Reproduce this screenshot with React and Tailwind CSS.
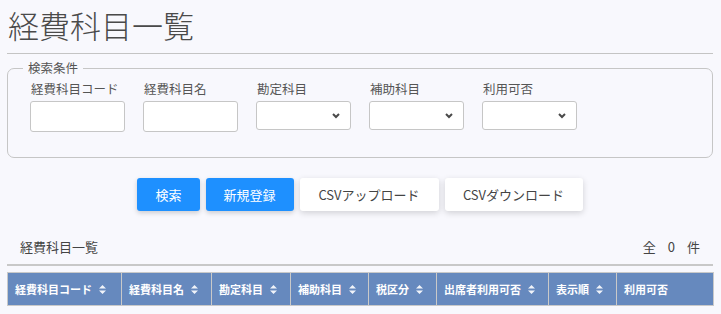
import React from "react";

const F = { fontFamily: '"Noto Sans CJK JP", "Noto Sans", sans-serif' };

function SortIcon() {
  return (
    <svg width="7" height="9" viewBox="0 0 7 9" className="ml-[7px] shrink-0" fill="#f0f3f9">
      <path d="M3.5 0 L7 3.6 H0 Z M0 5.4 H7 L3.5 9 Z" />
    </svg>
  );
}

function Chevron() {
  return (
    <svg width="8" height="6" viewBox="0 0 8 6" fill="none" stroke="#4a4a4a" strokeWidth="2">
      <polyline points="1,1 4,4 7,1" />
    </svg>
  );
}

const cols = [
  { label: "経費科目コード", w: 114, sort: true },
  { label: "経費科目名", w: 90, sort: true },
  { label: "勘定科目", w: 79, sort: true },
  { label: "補助科目", w: 78, sort: true },
  { label: "税区分", w: 68, sort: true },
  { label: "出席者利用可否", w: 112, sort: true },
  { label: "表示順", w: 68, sort: true },
  { label: "利用可否", w: 97, sort: false },
];

const fields = [
  { label: "経費科目コード", type: "input" },
  { label: "経費科目名", type: "input" },
  { label: "勘定科目", type: "select" },
  { label: "補助科目", type: "select" },
  { label: "利用可否", type: "select" },
];

export default function App() {
  return (
    <div style={F} className="min-h-screen bg-[#f8f8fd] pl-[7px] pr-[8px] text-[#555]">
      <h1 className="pl-[1px] pt-[5px] pb-[8px] text-[31px] leading-[40px] font-light text-[#4a4a4a] border-b border-[#c4c4c4]">
        経費科目一覧
      </h1>

      <fieldset className="mt-[5px] border border-[#c6c6c6] rounded-[7px] pl-[22px] pr-[22px] pt-[3px] pb-[25px]">
        <legend className="ml-[-7px] px-[5px] text-[12.5px] leading-[18px] text-[#555]">検索条件</legend>
        <div className="flex gap-[18px]">
          {fields.map((f) => (
            <div key={f.label} className="flex flex-col w-[95px]">
              <div className="pl-[1px] text-[12.5px] leading-[18px] text-[#555] mb-[3px] whitespace-nowrap">{f.label}</div>
              {f.type === "input" ? (
                <div className="h-[31px] bg-white border border-[#c6c6c6] rounded-[3px]" />
              ) : (
                <div className="h-[29px] bg-white border border-[#c6c6c6] rounded-[3px] flex items-center justify-end pr-[10px]">
                  <Chevron />
                </div>
              )}
            </div>
          ))}
        </div>
      </fieldset>

      <div className="mt-[20px] flex justify-center gap-[6px]">
        <div className="h-[33px] px-[18px] flex items-center rounded-[3px] bg-[#1e90ff] text-white text-[13px] shadow-[0_2px_5px_rgba(0,0,0,0.18)]">検索</div>
        <div className="h-[33px] px-[18px] flex items-center rounded-[3px] bg-[#1e90ff] text-white text-[13px] shadow-[0_2px_5px_rgba(0,0,0,0.18)]">新規登録</div>
        <div className="h-[33px] w-[139px] flex items-center justify-center rounded-[3px] bg-white text-[#444] text-[13px] shadow-[0_2px_6px_rgba(0,0,0,0.16)]">CSVアップロード</div>
        <div className="h-[33px] w-[138px] flex items-center justify-center rounded-[3px] bg-white text-[#444] text-[13px] shadow-[0_2px_6px_rgba(0,0,0,0.16)]">CSVダウンロード</div>
      </div>

      <div className="mt-[27px] flex items-center justify-between pl-[13px] pr-[13px] pb-[8px] border-b-2 border-[#c8c8c8]">
        <div className="text-[13px] leading-[18px] text-[#444]">経費科目一覧</div>
        <div className="flex gap-[12px] text-[13px] leading-[18px] text-[#444]">
          <span>全</span>
          <span>0</span>
          <span>件</span>
        </div>
      </div>

      <table className="mt-[6px] w-[706px] table-fixed border-collapse">
        <colgroup>
          {cols.map((c) => (
            <col key={c.label} style={{ width: c.w }} />
          ))}
        </colgroup>
        <thead>
          <tr>
            {cols.map((c) => (
              <th key={c.label} className="h-[33px] bg-[#6689be] border border-[#c9c9c9] px-[7px] text-left text-[11px] font-bold text-white">
                <div className="flex items-center whitespace-nowrap">
                  <span>{c.label}</span>
                  {c.sort && <SortIcon />}
                </div>
              </th>
            ))}
          </tr>
        </thead>
      </table>
    </div>
  );
}
